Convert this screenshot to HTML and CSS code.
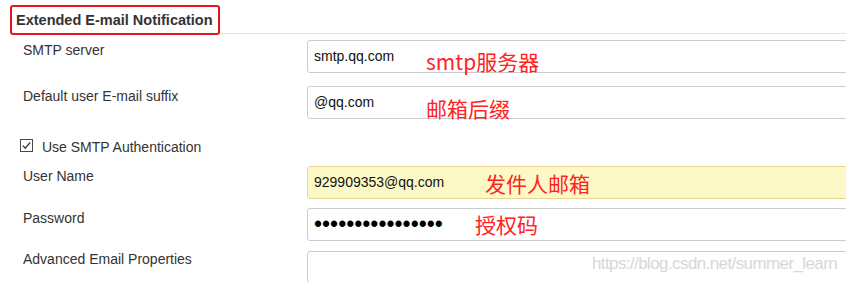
FILE: index.html
```html
<!DOCTYPE html>
<html>
<head>
<meta charset="utf-8">
<link rel="stylesheet" href="styles.css">
</head>
<body>
<div class="page">
  <div class="sec-head">
    <h2 class="title">Extended E-mail Notification</h2>
    <div class="rule"></div>
  </div>
  <div class="form">
    <div class="row first">
      <div class="lbl">SMTP server</div>
      <div class="field">smtp.qq.com</div>
    </div>
    <div class="row second">
      <div class="lbl">Default user E-mail suffix</div>
      <div class="field">@qq.com</div>
    </div>
    <div class="check-row">
      <svg class="cb" width="13" height="13" viewBox="0 0 13 13"><rect x="0.5" y="0.5" width="12" height="12" fill="#fff" stroke="#4a4a4a"/><path d="M2.8 6.6 L5.3 9.2 L10.2 3.4" fill="none" stroke="#333" stroke-width="1.3"/></svg>
      <span class="cb-text">Use SMTP Authentication</span>
    </div>
    <div class="row user">
      <div class="lbl">User Name</div>
      <div class="field filled">929909353@qq.com</div>
    </div>
    <div class="row pass">
      <div class="lbl">Password</div>
      <div class="field dots">••••••••••••••••</div>
    </div>
    <div class="row adv">
      <div class="lbl">Advanced Email Properties</div>
      <div class="field area"></div>
    </div>
  </div>
  <div class="note n1">smtp服务器</div>
  <div class="note n2">邮箱后缀</div>
  <div class="note n3">发件人邮箱</div>
  <div class="note n4">授权码</div>
  <div class="watermark">https://blog.csdn.net/summer_learn</div>
</div>
</body>
</html>
```

FILE: styles.css
```css
html, body {
  margin: 0;
  padding: 0;
  background: #ffffff;
  overflow: hidden;
}
.page {
  position: relative;
  width: 846px;
  height: 282px;
  overflow: hidden;
  padding-top: 5px;
  box-sizing: border-box;
  font-family: "Liberation Sans", Arial, sans-serif;
  font-size: 14px;
  color: #333;
}
.sec-head {
  display: flex;
  align-items: flex-end;
  margin-left: 10px;
}
.title {
  margin: 0;
  width: 210px;
  height: 30px;
  box-sizing: border-box;
  border: 2px solid #e8141e;
  border-radius: 3px;
  padding-left: 4px;
  font-size: 14.5px;
  font-weight: bold;
  line-height: 26px;
  color: #333;
  white-space: nowrap;
}
.rule {
  flex: 1;
  border-bottom: 1px solid #e2e2e2;
  margin-bottom: 1px;
}
.form {
  padding-left: 23px;
}
.row {
  display: grid;
  grid-template-columns: 284px 580px;
}
.row.first { margin-top: 5px; }
.row.second { margin-top: 13px; }
.row.user { margin-top: 11px; }
.row.pass { margin-top: 9px; }
.row.adv { margin-top: 10px; }
.lbl {
  padding-top: 2px;
  line-height: 16px;
  color: #333;
  white-space: nowrap;
}
.row.adv .lbl {
  padding-top: 0;
}
.field {
  height: 33px;
  box-sizing: border-box;
  border: 1px solid #cccccc;
  border-radius: 3px;
  background: #fff;
  padding: 0 6px;
  line-height: 31px;
  color: #111;
  white-space: nowrap;
}
.field.filled {
  background: #fdf9c6;
  border-color: #e8d592;
}
.field.dots {
  font-size: 23px;
  color: #000;
}
.field.area {
  height: 32px;
}
.check-row {
  display: flex;
  align-items: flex-start;
  margin-top: 20px;
  margin-left: -3px;
  height: 16px;
  line-height: 16px;
}
.cb {
  margin-top: 0;
  flex: none;
}
.cb-text {
  margin-left: 9px;
  color: #333;
}
.note {
  position: absolute;
  font-family: "Noto Sans CJK SC", "Noto Sans", sans-serif;
  font-size: 21px;
  line-height: 21px;
  color: #ff2222;
  white-space: nowrap;
}
.n1 { left: 426px; top: 51px; }
.n2 { left: 426px; top: 98px; }
.n3 { left: 485px; top: 173px; }
.n4 { left: 475px; top: 214px; }
.watermark {
  position: absolute;
  left: 592px;
  top: 255px;
  font-size: 17px;
  line-height: 17px;
  letter-spacing: -0.6px;
  color: #d7d7d7;
  white-space: nowrap;
}
```
